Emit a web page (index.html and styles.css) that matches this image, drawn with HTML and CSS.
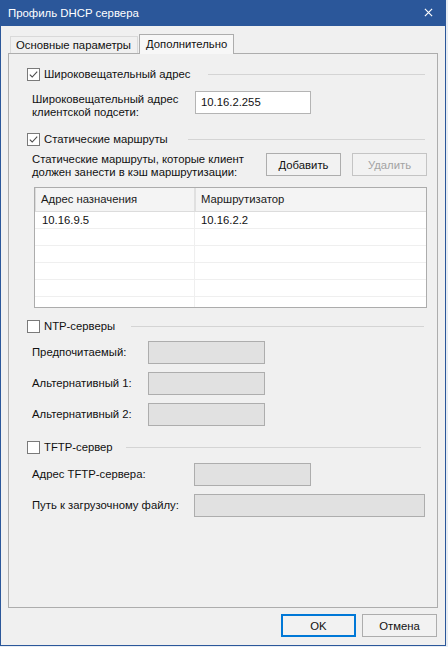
FILE: index.html
```html
<!DOCTYPE html>
<html lang="ru">
<head>
<meta charset="utf-8">
<title>Профиль DHCP сервера</title>
<link rel="stylesheet" href="styles.css">
</head>
<body>
<div class="window">
  <div class="titlebar">
    <span class="title">Профиль DHCP сервера</span>
    <svg class="close" width="10" height="10" viewBox="0 0 10 10"><path d="M1 1 L9 9 M9 1 L1 9" stroke="#fff" stroke-width="1.3" fill="none"/></svg>
  </div>
  <div class="body">
    <div class="tabs">
      <div class="tab">Основные параметры</div>
      <div class="tab tab-active">Дополнительно</div>
    </div>
    <div class="panel">
      <div class="ghead">
        <span class="cb"><svg width="13" height="13" viewBox="0 0 13 13"><rect x="0.5" y="0.5" width="12" height="12" fill="#fff" stroke="#7a7a7a"/><path d="M2.8 6.6 L5.2 9 L10.2 3.6" stroke="#4a4a4a" stroke-width="1.1" fill="none"/></svg></span>
        <span class="glabel">Широковещательный адрес</span>
        <span class="sep sep-g1"></span>
      </div>
      <div class="field field-bcast">
        <div class="flabel">Широковещательный адрес<br>клиентской подсети:</div>
        <div class="tb">10.16.2.255</div>
      </div>

      <div class="ghead ghead-routes">
        <span class="cb"><svg width="13" height="13" viewBox="0 0 13 13"><rect x="0.5" y="0.5" width="12" height="12" fill="#fff" stroke="#7a7a7a"/><path d="M2.8 6.6 L5.2 9 L10.2 3.6" stroke="#4a4a4a" stroke-width="1.1" fill="none"/></svg></span>
        <span class="glabel">Статические маршруты</span>
        <span class="sep sep-g2"></span>
      </div>
      <div class="routes">
        <div class="flabel">Статические маршруты, которые клиент<br>должен занести в кэш маршрутизации:</div>
        <button class="btn">Добавить</button>
        <button class="btn btn-disabled">Удалить</button>
      </div>
      <div class="listview">
        <div class="lv-head">
          <div class="lv-col lv-col1">Адрес назначения</div>
          <div class="lv-col">Маршрутизатор</div>
        </div>
        <div class="lv-row"><div class="lv-cell lv-col1">10.16.9.5</div><div class="lv-cell">10.16.2.2</div></div>
        <div class="lv-row"><div class="lv-cell lv-col1"></div><div class="lv-cell"></div></div>
        <div class="lv-row"><div class="lv-cell lv-col1"></div><div class="lv-cell"></div></div>
        <div class="lv-row"><div class="lv-cell lv-col1"></div><div class="lv-cell"></div></div>
        <div class="lv-row"><div class="lv-cell lv-col1"></div><div class="lv-cell"></div></div>
        <div class="lv-row"><div class="lv-cell lv-col1"></div><div class="lv-cell"></div></div>
      </div>

      <div class="ghead ghead-ntp">
        <span class="cb"><svg width="13" height="13" viewBox="0 0 13 13"><rect x="0.5" y="0.5" width="12" height="12" fill="#fff" stroke="#7a7a7a"/></svg></span>
        <span class="glabel">NTP-серверы</span>
        <span class="sep sep-ntp"></span>
      </div>
      <div class="fields fields-ntp">
        <div class="field field-ntp"><div class="flabel">Предпочитаемый:</div><div class="tb tb-disabled"></div></div>
        <div class="field field-ntp"><div class="flabel">Альтернативный 1:</div><div class="tb tb-disabled"></div></div>
        <div class="field field-ntp"><div class="flabel">Альтернативный 2:</div><div class="tb tb-disabled"></div></div>
      </div>

      <div class="ghead ghead-tftp">
        <span class="cb"><svg width="13" height="13" viewBox="0 0 13 13"><rect x="0.5" y="0.5" width="12" height="12" fill="#fff" stroke="#7a7a7a"/></svg></span>
        <span class="glabel">TFTP-сервер</span>
        <span class="sep sep-tftp"></span>
      </div>
      <div class="fields fields-tftp">
        <div class="field field-tftp"><div class="flabel">Адрес TFTP-сервера:</div><div class="tb tb-disabled"></div></div>
        <div class="field field-tftp"><div class="flabel">Путь к загрузочному файлу:</div><div class="tb tb-disabled tb-wide"></div></div>
      </div>
    </div>
    <div class="actions">
      <button class="btn btn-default">OK</button>
      <button class="btn">Отмена</button>
    </div>
  </div>
</div>
</body>
</html>
```
FILE: styles.css
```css
* { box-sizing: border-box; }
html, body { margin: 0; padding: 0; }
body {
  background: #e8edf3;
  font-family: "Liberation Sans", Arial, sans-serif;
  font-size: 11.3px;
  color: #111;
  width: 448px;
  height: 647px;
  overflow: hidden;
}
.window {
  width: 446px;
  height: 646px;
  border: 1px solid #2b579a;
  border-top: 0;
  background: #f0f0f0;
  display: flex;
  flex-direction: column;
}
.titlebar {
  height: 26px;
  background: #2b579a;
  margin: 0 -1px;
  display: flex;
  align-items: center;
  padding: 0 0 1px 8px;
  color: #fff;
}
.title { flex: 1; font-size: 11.4px; }
.close { margin-right: 13px; width: 9px; height: 9px; }
.body {
  flex: 1;
  padding: 8px 7px 7px 7px;
  display: flex;
  flex-direction: column;
}
.tabs {
  height: 19px;
  display: flex;
  align-items: flex-end;
  padding-left: 2px;
  position: relative;
  z-index: 1;
}
.tab {
  height: 17px;
  padding: 0 6px 0 5px;
  line-height: 16px;
  border: 1px solid #d9d9d9;
  border-bottom: 0;
  background: #f0f0f0;
}
.tab-active {
  height: 20px;
  margin-bottom: -1px;
  margin-left: 1px;
  padding: 1px 6px 0 6px;
  border-color: #adadad;
  background: #f7f7f7;
}
.panel {
  height: 555px;
  border: 1px solid #adadad;
  background: #f0f0f0;
  padding: 13px 10px 0 23px;
}
.ghead {
  height: 14px;
  display: flex;
  align-items: center;
  margin-left: -5px;
}
.cb { width: 13px; height: 13px; margin-right: 4px; display: block; }
.cb svg { display: block; }
.glabel { white-space: nowrap; }
.sep {
  flex: 1;
  height: 1px;
  background: #d4d4d4;
  margin-right: 2px;
}
.sep-g1 { margin-left: 18px; }
.sep-g2 { margin-left: 20px; }
.sep-ntp { margin-left: 16px; margin-right: 3px; }
.sep-tftp { margin-left: 13px; margin-right: 6px; }
.flabel { line-height: 13px; white-space: nowrap; }
.field {
  display: grid;
  align-items: start;
}
.field-bcast {
  margin-top: 10px;
  grid-template-columns: 163px 116px;
}
.field-bcast .flabel { padding-top: 2px; }
.tb {
  height: 23px;
  border: 1px solid #b4b4b4;
  background: #fff;
  padding: 0 5px;
  line-height: 21px;
}
.tb-disabled { background: #e1e1e1; border-color: #adadad; }
.ghead-routes { margin-top: 13px; }
.routes {
  margin-top: 7px;
  display: grid;
  grid-template-columns: 223px 75px 75px;
  column-gap: 11px;
  align-items: start;
}
.btn {
  height: 23px;
  width: 75px;
  border: 1px solid #adadad;
  background: #f2f2f2;
  font-family: "Liberation Sans", Arial, sans-serif;
  font-size: 11.3px;
  color: #111;
  padding: 0;
  margin: 0;
}
.btn-disabled { border-color: #c4c4c4; color: #a3a3a3; }
.listview {
  margin-top: 8px;
  margin-left: 2px;
  width: 393px;
  height: 121px;
  border: 1px solid #acacac;
  background: #fff;
  overflow: hidden;
}
.lv-head {
  height: 24px;
  display: grid;
  grid-template-columns: 160px 1fr;
  background: #f4f4f4;
  border-bottom: 1px solid #dcdcdc;
  border-left: 1px solid #dcdcdc;
}
.lv-col {
  line-height: 23px;
  padding-left: 5px;
  color: #1a1a1a;
}
.lv-head .lv-col1 { border-right: 2px solid #e0e0e0; }
.lv-row {
  height: 17px;
  display: grid;
  grid-template-columns: 160px 1fr;
  border-bottom: 1px solid #efefef;
}
.lv-cell { line-height: 17px; padding-left: 7px; }
.lv-row .lv-cell.lv-col1 { border-right: 1px solid #efefef; }
.lv-row .lv-cell + .lv-cell { padding-left: 6px; }
.ghead-ntp { margin-top: 11px; }
.fields { display: flex; flex-direction: column; gap: 8px; }
.fields-ntp { margin-top: 8px; }
.field-ntp { grid-template-columns: 116px 117px; align-items: center; }
.ghead-tftp { margin-top: 14px; }
.fields-tftp { margin-top: 9px; }
.field-tftp { grid-template-columns: 162px auto; align-items: center; justify-content: start; }
.field-tftp .tb { width: 117px; }
.field-tftp .tb-wide { width: 231px; }
.actions {
  margin-top: 6px;
  display: flex;
  justify-content: flex-end;
  gap: 6px;
  padding-right: 1px;
}
.btn-default { border-color: #0078d7; box-shadow: inset 0 0 0 1px #0078d7; }
```
